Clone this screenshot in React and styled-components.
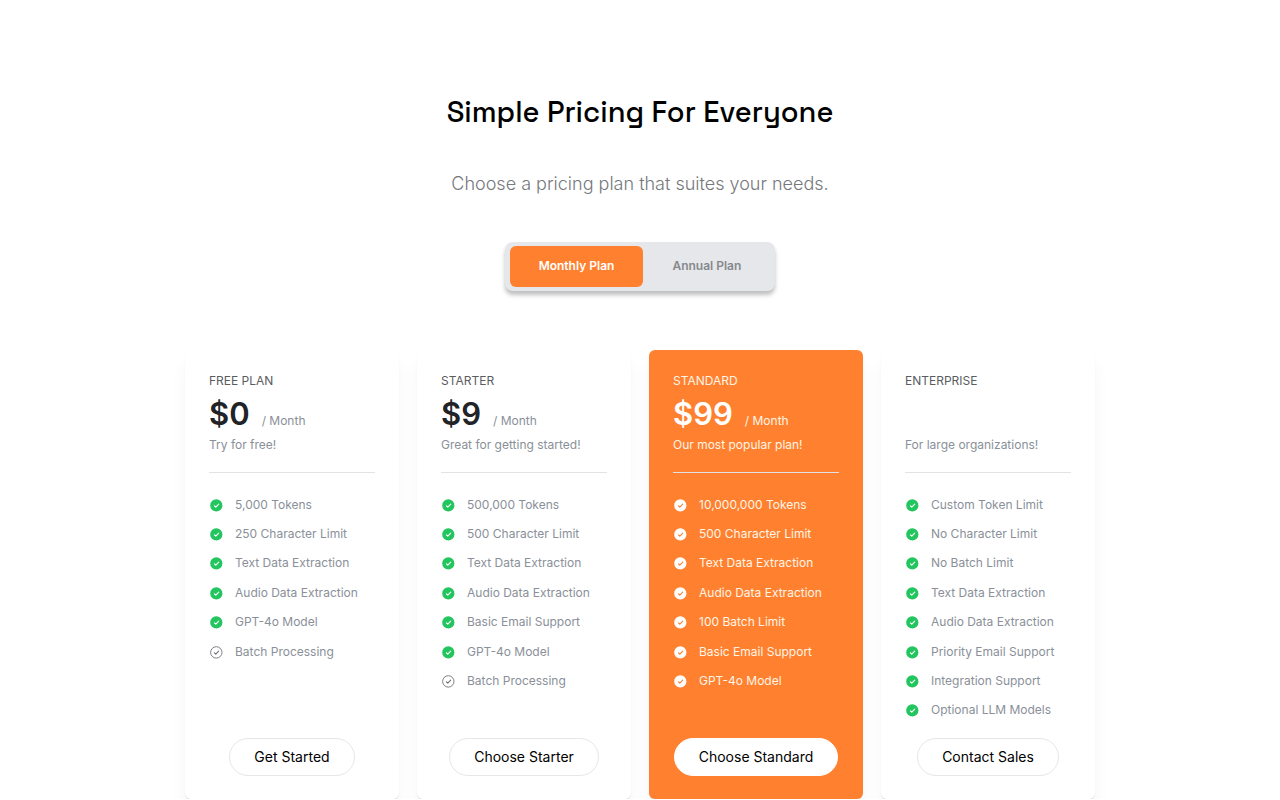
import React, { useState } from "react";
import styled, { createGlobalStyle, css } from "styled-components";

const GlobalStyle = createGlobalStyle`
  *, *::before, *::after { box-sizing: border-box; }
  body {
    margin: 0;
    background: #fff;
    color: #000;
    font-family: Inter, "Liberation Sans", sans-serif;
  }
  h1, h2, p, ul { margin: 0; padding: 0; }
`;

const Page = styled.main`
  display: flex;
  flex-direction: column;
  align-items: center;
  padding: 92px 24px 0;
`;

const Title = styled.h1`
  font-family: "Space Grotesk", Inter, sans-serif;
  font-size: 29px;
  line-height: 40px;
  font-weight: 500;
  text-align: center;
`;

const Subtitle = styled.p`
  margin-top: 38px;
  font-size: 18px;
  line-height: 28px;
  font-weight: 300;
  color: #75787c;
  text-align: center;
`;

const Toggle = styled.div`
  display: flex;
  margin-top: 44px;
  padding: 4px 5px;
  border-radius: 8px;
  background: #e5e7eb;
  box-shadow: 0 4px 4px rgba(0, 0, 0, 0.25);
`;

const ToggleButton = styled.button`
  padding: 12px 29px 13px;
  border: 0;
  border-radius: 6px;
  background: ${(p) => (p.$active ? "#ff812f" : "transparent")};
  color: ${(p) => (p.$active ? "#fff" : "#86898c")};
  font: 600 12px/16px Inter, "Liberation Sans", sans-serif;
  cursor: pointer;
`;

const Plans = styled.section`
  display: grid;
  grid-template-columns: repeat(4, minmax(0, 1fr));
  gap: 18px;
  width: 100%;
  max-width: 910px;
  margin-top: 59px;
`;

const Card = styled.article`
  display: flex;
  flex-direction: column;
  padding: 23px 24px;
  border-radius: 6px;
  color: #8a9099;
  background: #fff;
  box-shadow: 0 14px 18px rgba(0, 0, 0, 0.04), 0 1px 1px rgba(0, 0, 0, 0.1);
  ${(p) =>
    p.$featured &&
    css`
      color: #fff4e6;
      background: #ff812f;
    `}
`;

const PlanName = styled.h2`
  font-size: 12px;
  line-height: 16px;
  font-weight: 400;
  color: ${(p) => (p.$featured ? "#fff4e6" : "#5a5c5f")};
`;

const PriceRow = styled.div`
  display: flex;
  align-items: baseline;
  gap: 12px;
  height: 48px;
  padding-top: 1px;
  font-size: 12px;
  line-height: 48px;
`;

const Price = styled.strong`
  font-size: 31px;
  font-weight: 600;
  color: ${(p) => (p.$featured ? "#fff" : "#222326")};
`;

const Tagline = styled.p`
  font-size: 12px;
  line-height: 16px;
`;

const Divider = styled.hr`
  width: 100%;
  height: 1px;
  margin: 19px 0 17px;
  border: 0;
  background: #e1e3e6;
`;

const Features = styled.ul`
  display: grid;
  grid-template-rows: repeat(8, minmax(0, 1fr));
  height: 235px;
  list-style: none;
`;

const Feature = styled.li`
  display: flex;
  align-items: center;
  gap: 11px;
  font-size: 12px;
  line-height: 16px;
  white-space: nowrap;
`;

const Icon = styled.svg`
  flex: none;
  width: 15px;
  height: 16px;
`;

const PlanButton = styled.button`
  align-self: center;
  margin-top: 13px;
  padding: 8px 24px;
  border: 1px solid ${(p) => (p.$featured ? "#fff" : "#e5e7eb")};
  border-radius: 19px;
  background: #fff;
  color: #000;
  font: 400 14px/20px Inter, "Liberation Sans", sans-serif;
  white-space: nowrap;
  cursor: pointer;
`;

function CheckIcon({ included, featured }) {
  const tone = featured ? "#fff" : "#22c55e";
  return (
    <Icon viewBox="0 0 15 16" fill="none" aria-hidden="true">
      {included ? (
        <circle cx="7.3" cy="8.4" r="6.1" fill={tone} />
      ) : (
        <circle cx="7.3" cy="8.4" r="5.7" stroke="#6f7276" strokeWidth="0.9" />
      )}
      <path
        d="M5.4 8.8l1.4 1.4 2.9-3"
        stroke={!included ? "#6f7276" : featured ? "#ff812f" : "#fff"}
        strokeWidth="1.1"
        strokeLinecap="round"
        strokeLinejoin="round"
      />
    </Icon>
  );
}

const plans = [
  {
    name: "FREE PLAN",
    price: "$0",
    tagline: "Try for free!",
    features: ["5,000 Tokens", "250 Character Limit", "Text Data Extraction", "Audio Data Extraction", "GPT-4o Model"],
    excluded: ["Batch Processing"],
    action: "Get Started",
  },
  {
    name: "STARTER",
    price: "$9",
    tagline: "Great for getting started!",
    features: ["500,000 Tokens", "500 Character Limit", "Text Data Extraction", "Audio Data Extraction", "Basic Email Support", "GPT-4o Model"],
    excluded: ["Batch Processing"],
    action: "Choose Starter",
  },
  {
    name: "STANDARD",
    price: "$99",
    tagline: "Our most popular plan!",
    features: ["10,000,000 Tokens", "500 Character Limit", "Text Data Extraction", "Audio Data Extraction", "100 Batch Limit", "Basic Email Support", "GPT-4o Model"],
    excluded: [],
    action: "Choose Standard",
    featured: true,
  },
  {
    name: "ENTERPRISE",
    tagline: "For large organizations!",
    features: ["Custom Token Limit", "No Character Limit", "No Batch Limit", "Text Data Extraction", "Audio Data Extraction", "Priority Email Support", "Integration Support", "Optional LLM Models"],
    excluded: [],
    action: "Contact Sales",
  },
];

function PlanCard({ plan }) {
  const { featured } = plan;
  return (
    <Card $featured={featured}>
      <PlanName $featured={featured}>{plan.name}</PlanName>
      <PriceRow>
        {plan.price && (
          <>
            <Price $featured={featured}>{plan.price}</Price>
            <span>/ Month</span>
          </>
        )}
      </PriceRow>
      <Tagline>{plan.tagline}</Tagline>
      <Divider />
      <Features>
        {plan.features.map((text) => (
          <Feature key={text}>
            <CheckIcon included featured={featured} />
            {text}
          </Feature>
        ))}
        {plan.excluded.map((text) => (
          <Feature key={text}>
            <CheckIcon />
            {text}
          </Feature>
        ))}
      </Features>
      <PlanButton type="button" $featured={featured}>{plan.action}</PlanButton>
    </Card>
  );
}

export default function App() {
  const [period, setPeriod] = useState("Monthly Plan");
  return (
    <>
      <GlobalStyle />
      <Page>
        <Title>Simple Pricing For Everyone</Title>
        <Subtitle>Choose a pricing plan that suites your needs.</Subtitle>
        <Toggle role="group" aria-label="Billing period">
          {["Monthly Plan", "Annual Plan"].map((label) => (
            <ToggleButton
              key={label}
              type="button"
              aria-pressed={period === label}
              $active={period === label}
              onClick={() => setPeriod(label)}
            >
              {label}
            </ToggleButton>
          ))}
        </Toggle>
        <Plans>
          {plans.map((plan) => (
            <PlanCard key={plan.name} plan={plan} />
          ))}
        </Plans>
      </Page>
    </>
  );
}
